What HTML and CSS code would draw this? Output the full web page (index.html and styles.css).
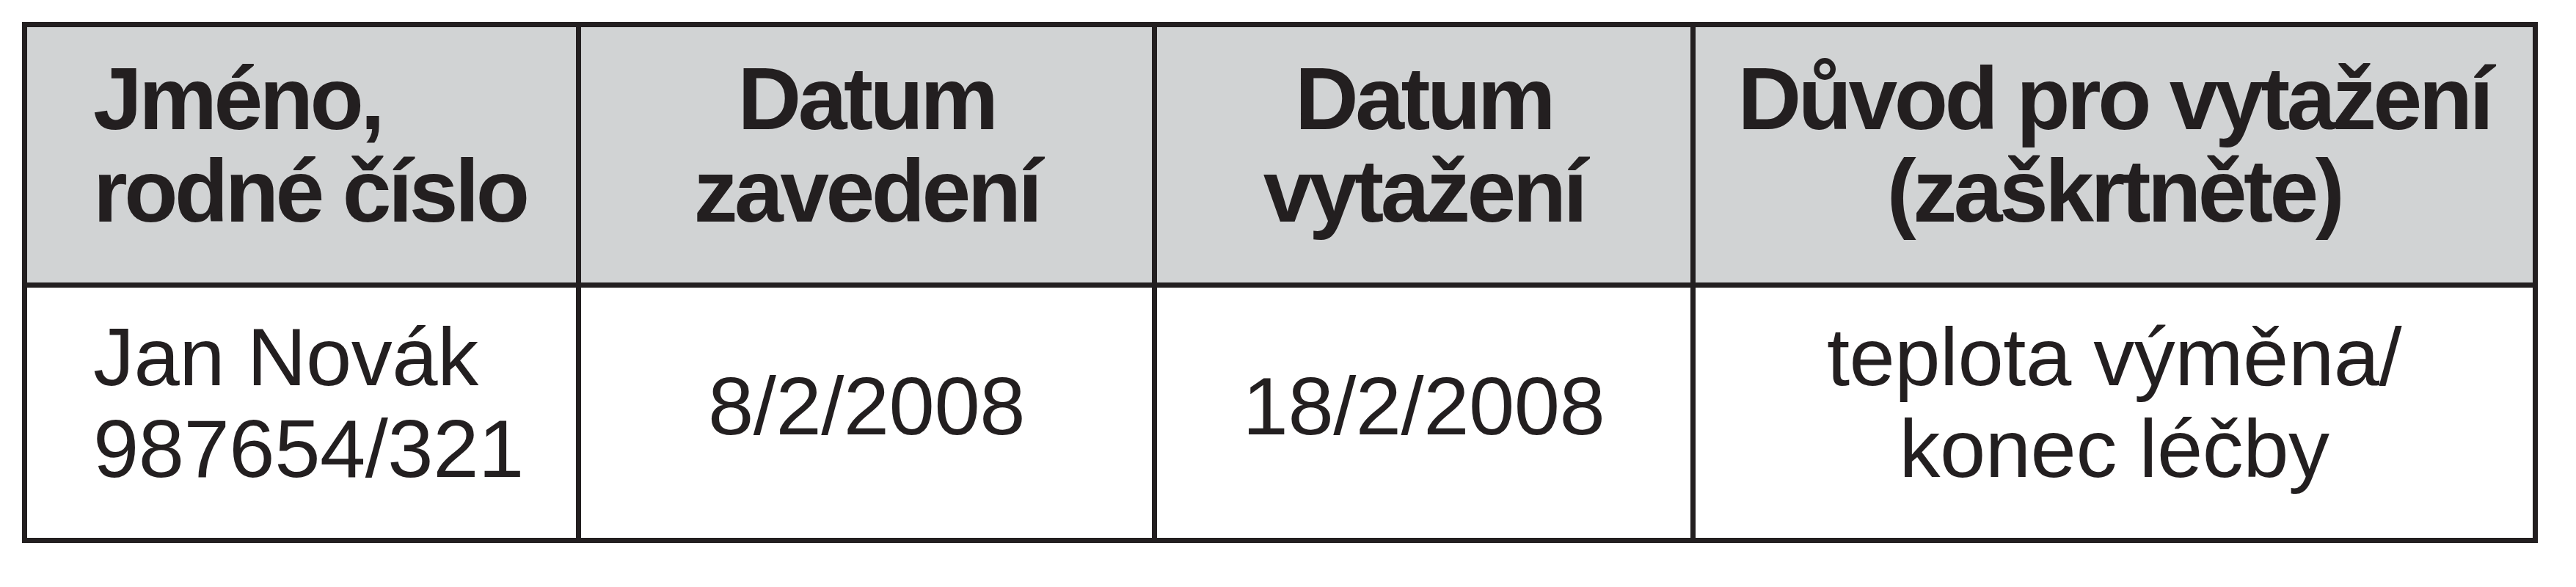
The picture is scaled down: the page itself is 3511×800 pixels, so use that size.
FILE: index.html
```html
<!DOCTYPE html>
<html lang="cs">
<head>
<meta charset="utf-8">
<title>Tabulka</title>
<link rel="stylesheet" href="styles.css">
</head>
<body>
<div class="page">
  <div class="sheet" role="table">
    <div class="cell head first" role="columnheader">Jméno,<br>rodné číslo</div>
    <div class="cell head" role="columnheader">Datum<br>zavedení</div>
    <div class="cell head" role="columnheader">Datum<br>vytažení</div>
    <div class="cell head" role="columnheader">Důvod pro vytažení<br>(zaškrtněte)</div>
    <div class="cell body first" role="cell">Jan Novák<br>987654/321</div>
    <div class="cell body single" role="cell">8/2/2008</div>
    <div class="cell body single" role="cell">18/2/2008</div>
    <div class="cell body" role="cell">teplota výměna/<br>konec léčby</div>
  </div>
</div>
</body>
</html>
```

FILE: styles.css
```css
html, body {
  margin: 0;
  padding: 0;
  background: #ffffff;
}

.page {
  padding: 30px;
}

.sheet {
  display: grid;
  grid-template-columns: 748px 778px 727px 1141px;
  grid-template-rows: 348px 341px;
  gap: 7px;
  padding: 7px;
  background: #231f20;
  width: max-content;
}

.cell {
  display: flex;
  flex-direction: column;
  justify-content: center;
  align-items: center;
  text-align: center;
  padding-bottom: 28px;
  color: #231f20;
  font-family: "Liberation Sans", Arial, sans-serif;
  white-space: nowrap;
}

.cell.first {
  align-items: flex-start;
  text-align: left;
  padding-left: 90px;
}

.head {
  background: #d1d3d4;
  font-weight: 700;
  font-size: 120px;
  line-height: 126px;
  letter-spacing: -4.5px;
}

.body {
  background: #ffffff;
  font-weight: 400;
  font-size: 112px;
  line-height: 125px;
  letter-spacing: -0.5px;
}

.body.single {
  padding-bottom: 19px;
}
```
